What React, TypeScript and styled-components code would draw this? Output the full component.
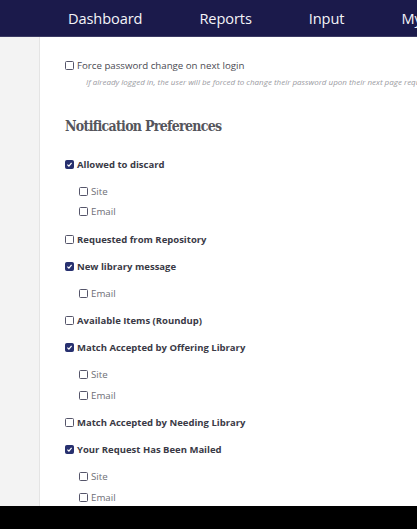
import React from 'react'
import styled, { createGlobalStyle } from 'styled-components'

const GlobalStyle = createGlobalStyle`
  html, body {
    margin: 0;
    padding: 0;
    overflow: hidden;
    background: #000;
  }
  body {
    font-family: 'Open Sans', 'Liberation Sans', sans-serif;
  }
`

const Page = styled.div`
  width: 417px;
  height: 529px;
  display: flex;
  flex-direction: column;
  overflow: hidden;
`

const NavBar = styled.nav`
  height: 36px;
  flex: none;
  background: #1b1a4b;
  border-bottom: 1px solid #3b3a63;
  display: flex;
  align-items: center;
  padding-left: 68px;
  gap: 57px;
  white-space: nowrap;
  overflow: hidden;
`

const NavLink = styled.a`
  color: #f4f4f8;
  font-size: 14.6px;
  text-decoration: none;
  letter-spacing: -0.1px;
`

const Body = styled.div`
  flex: 1;
  display: flex;
  min-height: 0;
  background: #fff;
`

const Sidebar = styled.aside`
  width: 39px;
  flex: none;
  background: #f3f3f3;
  border-right: 1px solid #e4e4e4;
`

const Content = styled.main`
  flex: 1;
  min-width: 0;
  padding: 18px 0 0 25px;
  overflow: hidden;
`

const Row = styled.label<{ $sub?: boolean; $bold?: boolean }>`
  display: flex;
  align-items: center;
  gap: 2px;
  height: ${(p) => (p.$sub ? '20.5px' : '20px')};
  margin-left: ${(p) => (p.$sub ? '14px' : '0')};
  font-size: ${(p) => (p.$bold ? '9.5px' : '9.7px')};
  font-weight: ${(p) => (p.$bold ? 700 : 400)};
  color: ${(p) => (p.$bold ? '#3a3a46' : p.$sub ? '#6e6e76' : '#4a4a52')};
  white-space: nowrap;
`

const Box = styled.span<{ $checked?: boolean }>`
  width: 9px;
  height: 9px;
  box-sizing: border-box;
  flex: none;
  border-radius: 1.5px;
  border: 1.2px solid ${(p) => (p.$checked ? '#27306f' : '#55556a')};
  background: ${(p) => (p.$checked ? '#27306f' : '#fff')};
  display: flex;
  align-items: center;
  justify-content: center;
  margin-right: 1px;
`

const Hint = styled.div`
  margin: 0 0 0 21px;
  font-size: 8px;
  font-style: italic;
  color: #9a9aa2;
  white-space: nowrap;
  line-height: 14px;
`

const Heading = styled.h2`
  margin: 28px 0 19px;
  font-family: 'DejaVu Serif Condensed', 'DejaVu Serif', 'Liberation Serif', serif;
  font-stretch: condensed;
  font-size: 14px;
  line-height: 18px;
  font-weight: 700;
  color: #55555c;
  letter-spacing: -0.7px;
`

const Group = styled.div`
  margin-bottom: 7px;
`

const SubList = styled.div`
  margin-top: 7px;
`

const Footer = styled.div`
  height: 23px;
  flex: none;
  background: #000;
`

const Check = () => (
  <svg width="7" height="7" viewBox="0 0 10 10">
    <path d="M2 5.2 L4.2 7.3 L8 2.8" fill="none" stroke="#fff" strokeWidth="1.8" />
  </svg>
)

type Pref = { label: string; checked: boolean; subs: string[] }

const prefs: Pref[] = [
  { label: 'Allowed to discard', checked: true, subs: ['Site', 'Email'] },
  { label: 'Requested from Repository', checked: false, subs: [] },
  { label: 'New library message', checked: true, subs: ['Email'] },
  { label: 'Available Items (Roundup)', checked: false, subs: [] },
  { label: 'Match Accepted by Offering Library', checked: true, subs: ['Site', 'Email'] },
  { label: 'Match Accepted by Needing Library', checked: false, subs: [] },
  { label: 'Your Request Has Been Mailed', checked: true, subs: ['Site', 'Email'] },
]

const App: React.FC = () => {
  return (
    <Page>
      <GlobalStyle />
      <NavBar>
        <NavLink>Dashboard</NavLink>
        <NavLink>Reports</NavLink>
        <NavLink>Input</NavLink>
        <NavLink>My Account</NavLink>
      </NavBar>
      <Body>
        <Sidebar />
        <Content>
          <Row>
            <Box />
            Force password change on next login
          </Row>
          <Hint>
            If already logged in, the user will be forced to change their password upon their next page request.
          </Hint>
          <Heading>Notification Preferences</Heading>
          {prefs.map((p) => (
            <Group key={p.label}>
              <Row $bold>
                <Box $checked={p.checked}>{p.checked && <Check />}</Box>
                {p.label}
              </Row>
              {p.subs.length > 0 && (
                <SubList>
                  {p.subs.map((s) => (
                    <Row $sub key={s}>
                      <Box />
                      {s}
                    </Row>
                  ))}
                </SubList>
              )}
            </Group>
          ))}
        </Content>
      </Body>
      <Footer />
    </Page>
  )
}

export default App
